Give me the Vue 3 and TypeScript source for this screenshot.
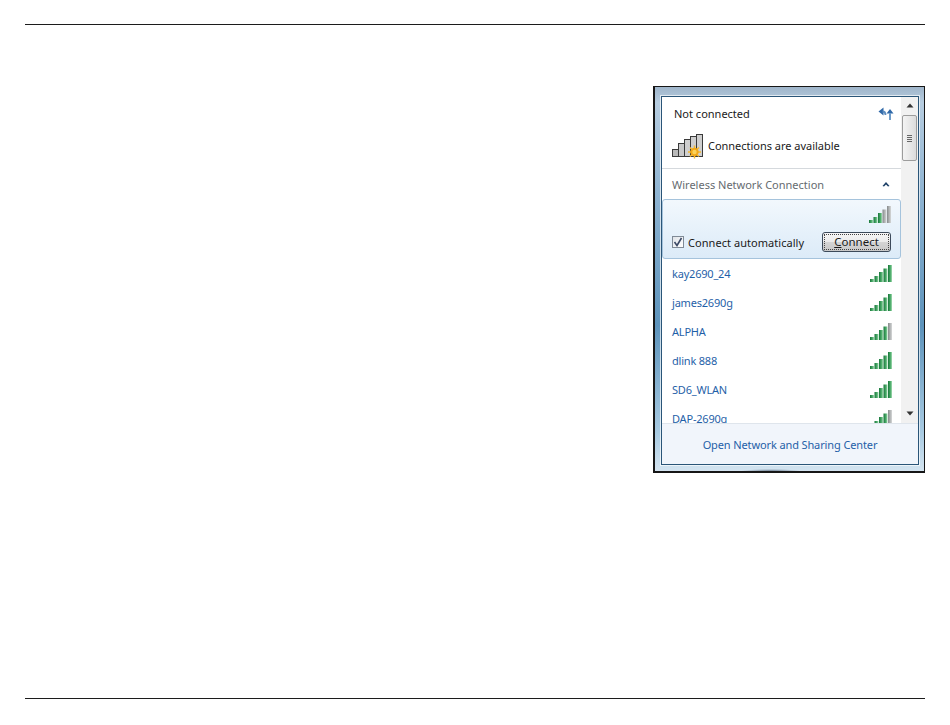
<script setup lang="ts">
interface Net { name: string; level: number }
const nets: Net[] = [
  { name: 'kay2690_24', level: 5 },
  { name: 'james2690g', level: 5 },
  { name: 'ALPHA', level: 4 },
  { name: 'dlink 888', level: 5 },
  { name: 'SD6_WLAN', level: 5 },
  { name: 'DAP-2690g', level: 4 },
]
const bars = [
  { x: 0, y: 14, h: 3 },
  { x: 4.5, y: 11, h: 6 },
  { x: 9, y: 7, h: 10 },
  { x: 13.5, y: 3.5, h: 13.5 },
  { x: 18, y: 0, h: 17 },
]
</script>

<template>
  <div class="page">
    <div class="rule"></div>
    <div class="window">
      <svg class="defs" width="0" height="0">
        <defs>
          <linearGradient id="sigOn" x1="0" y1="0" x2="1" y2="0">
            <stop offset="0" stop-color="#17763a" />
            <stop offset="0.6" stop-color="#4cab6a" />
            <stop offset="1" stop-color="#a6dcb4" />
          </linearGradient>
          <linearGradient id="sigOff" x1="0" y1="0" x2="1" y2="0">
            <stop offset="0" stop-color="#85898a" />
            <stop offset="1" stop-color="#d6d8d8" />
          </linearGradient>
        </defs>
      </svg>
      <div class="panel">
        <div class="main">
          <div class="content">
            <div class="top">
              <div class="status-row">
                <span class="status">Not connected</span>
                <svg class="refresh" width="16" height="14" viewBox="0 0 16 14">
                  <path d="M0.5 4.5 L5.5 0.5 L5.5 8.5 Z" fill="#2f68a8" />
                  <path d="M4.5 4.5 Q7.5 4.5 7.5 8" fill="none" stroke="#5d8dc0" stroke-width="1.8" />
                  <path d="M8.5 6.5 L12 2 L15.5 6.5 Z" fill="#2f68a8" />
                  <path d="M12 6 V13" fill="none" stroke="#6e9cca" stroke-width="2" />
                </svg>
              </div>
              <div class="avail-row">
                <svg class="bigicon" width="32" height="28" viewBox="0 0 32 28">
                  <rect x="0.5" y="17.5" width="6" height="7" fill="#b9b9b9" stroke="#3a3a3a" />
                  <rect x="6.5" y="11.5" width="6" height="13" fill="#c9c9c9" stroke="#3a3a3a" />
                  <rect x="12.5" y="7.5" width="6" height="17" fill="#cfcfcf" stroke="#3a3a3a" />
                  <rect x="18.5" y="4.5" width="6" height="20" fill="#cfcfcf" stroke="#3a3a3a" />
                  <rect x="24.5" y="2.5" width="6" height="22" fill="#cfcfcf" stroke="#3a3a3a" />
                  <path d="M22.5 13.5 V26.5 M16 20 H29 M18 15.5 L27 24.5 M27 15.5 L18 24.5" stroke="#f6b92e" stroke-width="1.4" />
                  <circle cx="22.5" cy="20" r="4.2" fill="#f2a918" />
                  <circle cx="22.5" cy="20" r="2.2" fill="#fbd25a" />
                </svg>
                <span class="avail">Connections are available</span>
              </div>
            </div>
            <div class="section">
              <span>Wireless Network Connection</span>
              <svg width="8" height="6" viewBox="0 0 8 6"><path d="M0.5 5 L4 1 L7.5 5 L6 5.5 L4 3.5 L2 5.5 Z" fill="#1c3f66" /></svg>
            </div>
            <div class="selected">
              <div class="sel-top">
                <svg width="22" height="17" viewBox="0 0 22 17">
                  <rect v-for="(b, i) in bars" :key="i" :x="b.x" :y="b.y" width="4" :height="b.h" :fill="i < 3 ? 'url(#sigOn)' : 'url(#sigOff)'" />
                </svg>
              </div>
              <div class="sel-bottom">
                <label class="auto">
                  <span class="check">
                    <svg width="10" height="10" viewBox="0 0 10 10"><path d="M1.5 5 L4 8.5 L8.5 1" fill="none" stroke="#3c4a66" stroke-width="1.6" /></svg>
                  </span>
                  Connect automatically
                </label>
                <button class="connect"><span class="dots"><u>C</u>onnect</span></button>
              </div>
            </div>
            <div class="list">
              <div v-for="n in nets" :key="n.name" class="row">
                <span class="name">{{ n.name }}</span>
                <svg width="22" height="17" viewBox="0 0 22 17">
                  <rect v-for="(b, i) in bars" :key="i" :x="b.x" :y="b.y" width="4" :height="b.h" :fill="i < n.level ? 'url(#sigOn)' : 'url(#sigOff)'" />
                </svg>
              </div>
            </div>
          </div>
          <div class="scrollbar">
            <svg class="arrow" width="8" height="5" viewBox="0 0 8 5"><path d="M4 0.5 L7.5 4.5 H0.5 Z" fill="#333" /></svg>
            <div class="thumb">
              <div class="grip"><i></i><i></i><i></i><i></i></div>
            </div>
            <div class="spacer"></div>
            <svg class="arrow" width="8" height="5" viewBox="0 0 8 5"><path d="M4 4.5 L7.5 0.5 H0.5 Z" fill="#333" /></svg>
          </div>
        </div>
        <div class="footer">Open Network and Sharing Center</div>
      </div>
    </div>
    <div class="spring"></div>
    <div class="rule"></div>
  </div>
</template>

<style scoped>
.page {
  box-sizing: border-box;
  width: 950px;
  height: 725px;
  padding: 24px 25px 26px;
  display: flex;
  flex-direction: column;
  background: #fff;
  font-family: "Noto Sans", "Open Sans", sans-serif;
}
.rule { height: 1px; background: #1c1c1c; flex: none; }
.spring { flex: 1; }
.defs { position: absolute; }
.window {
  box-sizing: border-box;
  align-self: flex-end;
  width: 272px;
  height: 387px;
  margin-top: 61px;
  padding: 9px 5px 6px 6px;
  border: 1px solid #161616;
  border-left-width: 2px;
  border-bottom-width: 2px;
  background:
    radial-gradient(ellipse 30px 2px at 43% 100%, #6d7f92 0%, rgba(109, 127, 146, 0) 100%),
    linear-gradient(180deg, #9fb5ca 0%, #b7cde0 4%, #8fb4d2 28%, #5d93bb 62%, #a9cbe2 90%, #d4e4f0 100%);
}
.panel {
  box-sizing: border-box;
  height: 100%;
  border: 1px solid #2a5578;
  box-shadow: 0 0 0 1px rgba(255, 255, 255, 0.65);
  background: #fff;
  display: flex;
  flex-direction: column;
}
.main { flex: 1; display: flex; min-height: 0; }
.content { flex: 1; min-width: 0; display: flex; flex-direction: column; }
.top {
  box-sizing: border-box;
  height: 72px;
  border-bottom: 1px solid #d5d9dd;
  padding: 0 7px 0 10px;
  flex: none;
}
.status-row { display: flex; justify-content: space-between; height: 32px; align-items: center; padding: 0 0 0 2px; }
.status { font-size: 11px; color: #1a1a1a; }
.refresh { margin-top: 1px; }
.avail-row { display: flex; align-items: center; gap: 4px; margin-top: 3px; }
.bigicon { flex: none; }
.avail { font-size: 11px; letter-spacing: -0.02px; color: #1a1a1a; margin-top: -2px; }
.section {
  box-sizing: border-box;
  height: 30px;
  flex: none;
  padding: 0 11px 0 10px;
  display: flex;
  justify-content: space-between;
  align-items: center;
  font-size: 11px;
  color: #666b70;
}
.selected {
  box-sizing: border-box;
  height: 60px;
  flex: none;
  border: 1px solid #a5c3dc;
  border-radius: 3px;
  background: linear-gradient(180deg, #f2f8fd 0%, #dcebf8 100%);
  padding: 6px 9px 6px 9px;
  display: flex;
  flex-direction: column;
  justify-content: space-between;
}
.sel-top { display: flex; justify-content: flex-end; }
.sel-bottom { display: flex; justify-content: space-between; align-items: center; }
.auto { display: flex; align-items: center; gap: 4px; font-size: 11px; letter-spacing: 0.05px; color: #1a1a1a; }
.check {
  box-sizing: border-box;
  width: 12px;
  height: 12px;
  border: 1px solid #7f8a96;
  background: linear-gradient(135deg, #dfe3e8, #fff);
  display: flex;
  align-items: center;
  justify-content: center;
}
.connect {
  box-sizing: border-box;
  width: 69px;
  height: 20px;
  padding: 1px;
  border: 1px solid #3c4a5a;
  border-radius: 3px;
  background: linear-gradient(180deg, #f6f6f6 0%, #ebebeb 48%, #d4d4d4 52%, #c8c8c8 100%);
  font: inherit;
  font-size: 11.5px;
  color: #1a1a1a;
  display: flex;
}
.dots {
  flex: 1;
  border: 1px dotted #444;
  display: flex;
  align-items: center;
  justify-content: center;
  line-height: 1;
}
.list { flex: 1; min-height: 0; overflow: hidden; }
.row {
  box-sizing: border-box;
  height: 29px;
  padding: 0 9px 0 10px;
  display: flex;
  justify-content: space-between;
  align-items: center;
}
.name { font-size: 11px; letter-spacing: -0.2px; color: #1f5fa8; }
.scrollbar {
  box-sizing: border-box;
  width: 17px;
  flex: none;
  background: #f1f1f1;
  display: flex;
  flex-direction: column;
  align-items: center;
  padding-top: 6px;
  padding-bottom: 7px;
}
.arrow { flex: none; }
.thumb {
  box-sizing: border-box;
  width: 15px;
  height: 46px;
  margin-top: 7px;
  border: 1px solid #9c9c9c;
  border-radius: 2px;
  background: linear-gradient(90deg, #f4f4f4, #dcdcdc);
  display: flex;
  align-items: center;
  justify-content: center;
}
.grip { display: flex; flex-direction: column; gap: 1px; }
.grip i { display: block; width: 5px; height: 1px; background: #666; }
.spacer { flex: 1; }
.footer {
  box-sizing: border-box;
  height: 41px;
  flex: none;
  border-top: 1px solid #dfe5ec;
  background: #f1f5fb;
  display: flex;
  align-items: center;
  justify-content: center;
  font-size: 11px;
  letter-spacing: -0.12px;
  color: #1f5fa8;
}
</style>
